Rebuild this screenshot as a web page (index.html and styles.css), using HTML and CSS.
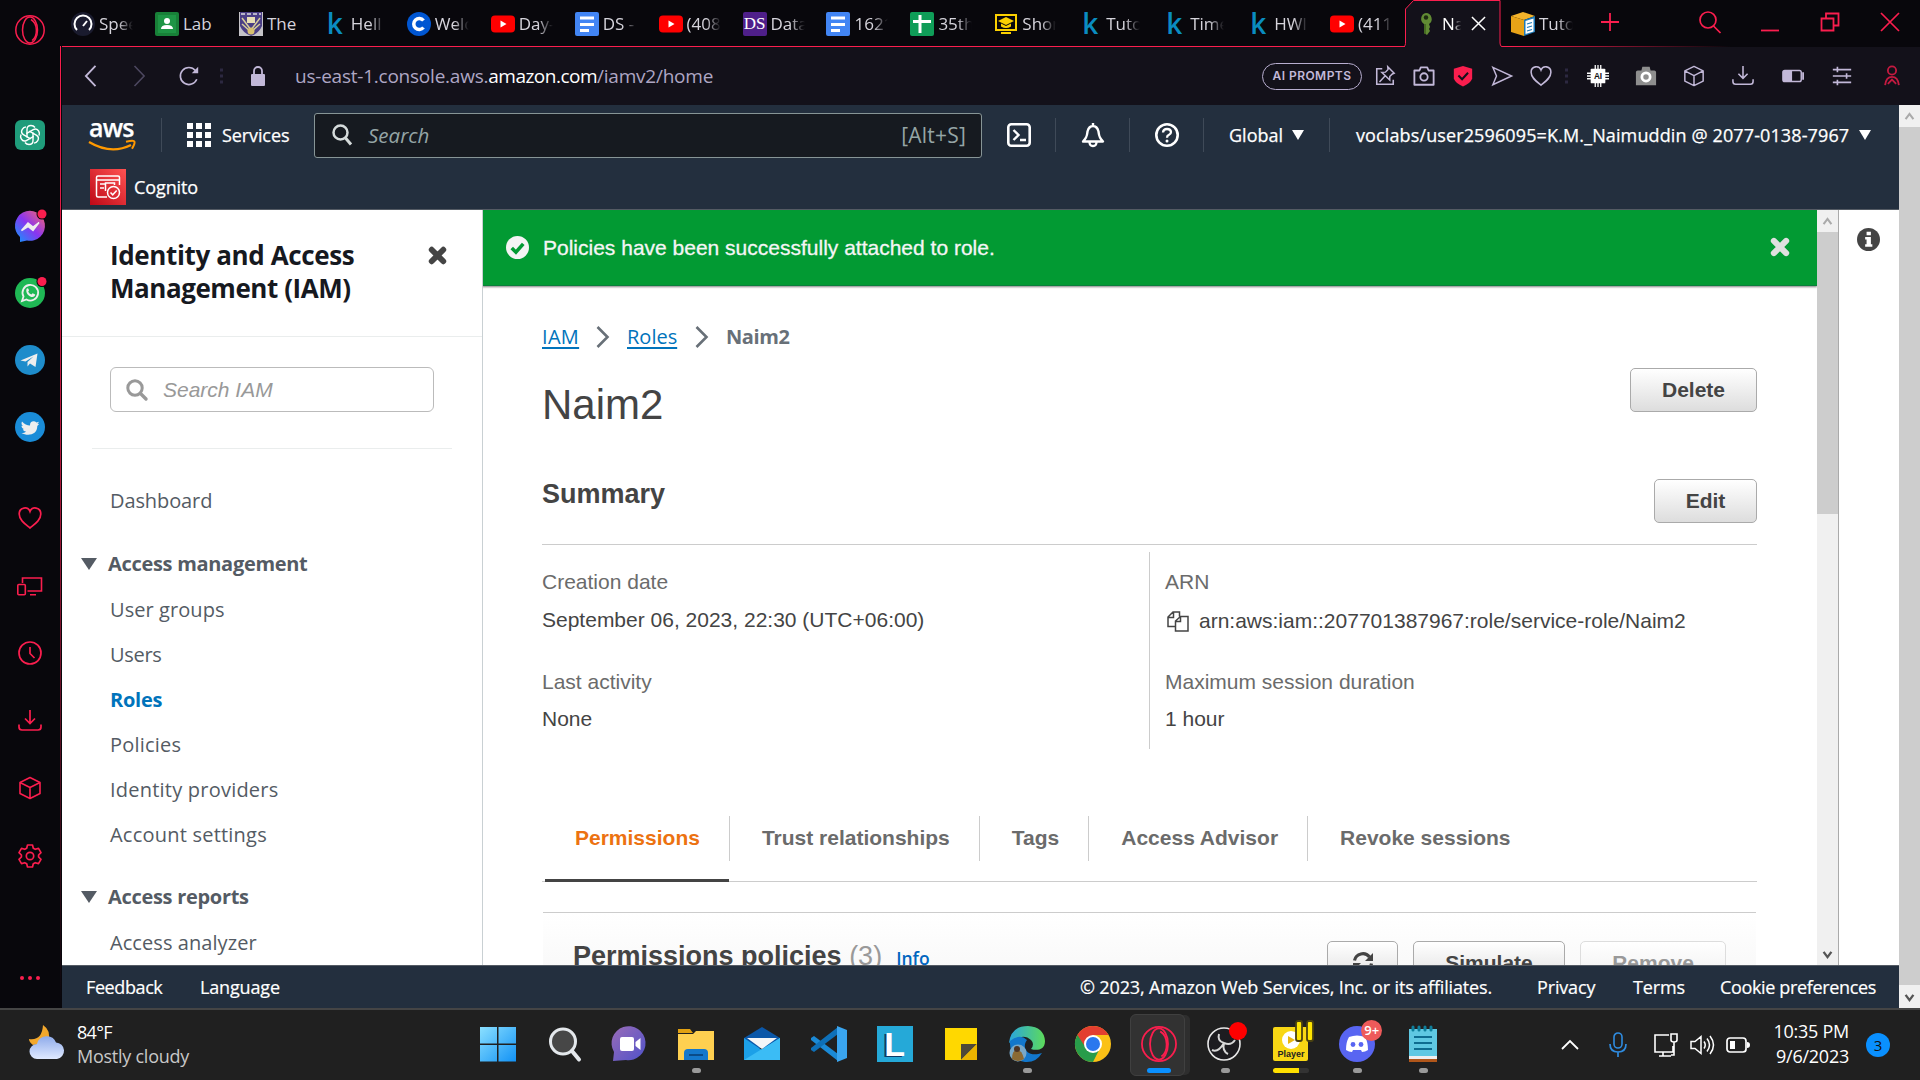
FILE: index.html
```html
<!DOCTYPE html>
<html lang="en">
<head>
<meta charset="utf-8">
<title>Naim2 | IAM</title>
<link rel="stylesheet" href="styles.css">
</head>
<body>
<svg class="defs" aria-hidden="true">
  <symbol id="youtube" viewBox="0 0 24 24"><rect y="3.5" width="24" height="17" rx="4" fill="#f00"/><path d="M9.5 8.5v7l6-3.500z" fill="#fff"/></symbol>
  <symbol id="docs" viewBox="0 0 24 24"><rect width="24" height="24" rx="2" fill="#4285f4"/><path d="M5 6h14M5 12.500h14M5 18.500h9" stroke="#fff" stroke-width="3"/></symbol>
  <symbol id="opera" viewBox="0 0 30 30"><g fill="none" stroke="#fa1e4e" stroke-width="1.500"><circle cx="15" cy="15" r="14.200"/><ellipse cx="15" cy="15" rx="7.500" ry="13"/><path d="M16 4.500c7 4 7 17 1 21"/></g></symbol>
  <symbol id="cube" viewBox="0 0 24 24"><path d="M12 1.500l10 5v11l-10 5-10-5v-11zM2 6.500l10 5 10-5M12 11.500v11" fill="none" stroke="currentColor" stroke-width="1.600" stroke-linejoin="round"/></symbol>
  <symbol id="download" viewBox="0 0 24 24"><path d="M12 1v13M7 9.500l5 5 5-5M1 15.500v2.500q0 3 3 3h16q3 0 3-3v-2.500" fill="none" stroke="currentColor" stroke-width="1.700"/></symbol>
  <symbol id="heart" viewBox="0 0 24 24"><path d="M12 22C7 18 1.200 14 1.200 8c0-7 8.800-8 10.800-2.500C14 0 22.800 1 22.800 8c0 6-5.800 10-10.800 14z" fill="none" stroke="currentColor" stroke-width="1.700"/></symbol>
  <symbol id="cross" viewBox="0 0 18 18"><path d="M3.500 3.500l11 11M14.500 3.500l-11 11" stroke="currentColor" stroke-width="5.500" stroke-linecap="round"/></symbol>
</svg>

<div class="browser">
  <aside class="rail">
    <svg class="r"><use href="#opera"/></svg>
    <svg class="r gpt" viewBox="0 0 30 30"><rect width="30" height="30" rx="6" fill="#1f9c7b"/><g fill="none" stroke="#fff" stroke-width="1.400"><path d="M12 17.500V9.500q0-4 4-4 2.500 0 4 2"/><path d="M12 17.500V9.500q0-4 4-4 2.500 0 4 2" transform="rotate(60 15 15)"/><path d="M12 17.500V9.500q0-4 4-4 2.500 0 4 2" transform="rotate(120 15 15)"/><path d="M12 17.500V9.500q0-4 4-4 2.500 0 4 2" transform="rotate(180 15 15)"/><path d="M12 17.500V9.500q0-4 4-4 2.500 0 4 2" transform="rotate(240 15 15)"/><path d="M12 17.500V9.500q0-4 4-4 2.500 0 4 2" transform="rotate(300 15 15)"/></g></svg>
    <svg class="r social" viewBox="0 0 30 30"><defs><linearGradient id="msg" x1="0" y1="1" x2="1" y2="0"><stop stop-color="#0a9cff"/><stop offset=".5" stop-color="#8a35f0"/><stop offset="1" stop-color="#ff6968"/></linearGradient></defs><path d="M5 31v-5A15 15 0 1 1 12 29.500z" fill="url(#msg)"/><path d="M6.500 19.500l6.500-7.500 5 4 6-4.500-6 8-5-4z" fill="#eee" stroke="#eee" stroke-width="1.500"/><circle cx="27" cy="3" r="5.500" fill="#08070c"/><circle cx="27" cy="3" r="4.500" fill="#fa1e4e"/></svg>
    <svg class="r next" viewBox="0 0 30 30"><circle cx="15" cy="15" r="15" fill="#1fb855"/><path d="M7 23l1.500-4.500a7.800 7.800 0 1 1 3 3z" fill="none" stroke="#eee" stroke-width="1.800"/><path d="M11.500 11c1-1.500 2-.5 2.500 1.500l-.8 1.200q1 2 3.200 2.800l1.200-1.300 2.600 1.300c0 2.500-3 3-5 1.900-3-1.500-4.500-4.500-3.700-7.400z" fill="#eee"/><circle cx="27" cy="3.500" r="5.500" fill="#08070c"/><circle cx="27" cy="3.500" r="4.500" fill="#fa1e4e"/></svg>
    <svg class="r next" viewBox="0 0 30 30"><circle cx="15" cy="15" r="15" fill="#1e8ccb"/><path d="M5.500 15.500L22.500 8.500 20.500 22l-5.500-3.500-2.500 3v-4.500l6-5.500-8 5z" fill="#eee"/></svg>
    <svg class="r next" viewBox="0 0 30 30"><circle cx="15" cy="15" r="15" fill="#1a8cd8"/><path d="M7 9.500q3.500 4 8 4c-.5-4 4-5.500 6.500-3l2.500-.8-1.500 2.300 1.800-.3-2 2.300c0 9-9.500 10.500-15.800 7 2.200 0 3.500-.5 4.500-1.500-2-.3-2.800-1.200-3.200-2.300h1.400c-2-.8-2.700-2-2.700-3.500l1.400.4c-1.500-1.300-1.700-3-.9-4.600z" fill="#eee"/></svg>
    <svg class="r t social"><use href="#heart"/></svg>
    <svg class="r t next" viewBox="0 0 24 24"><g fill="none" stroke="currentColor" stroke-width="1.600"><path d="M4.500 9V4h19v13h-14M12 20.800h6"/><rect x="-.2" y="10.500" width="7.500" height="10.300" rx="1"/></g></svg>
    <svg class="r t next" viewBox="0 0 24 24"><g fill="none" stroke="currentColor" stroke-width="1.700"><circle cx="12" cy="12" r="11"/><path d="M12 6v6.500l4.500 4.500"/></g></svg>
    <svg class="r t next"><use href="#download"/></svg>
    <svg class="r t next"><use href="#cube"/></svg>
    <svg class="r t next" viewBox="0 0 24 24"><g fill="none" stroke="currentColor" stroke-width="1.700" stroke-linejoin="round"><circle cx="12" cy="12" r="3.700"/><path d="M9.500 1h5l.8 3.200 2 1.100 3.200-.9 2.500 4.200-2.400 2.400v2l2.400 2.400-2.500 4.200-3.200-.9-2 1.100-.8 3.200h-5l-.8-3.200-2-1.100-3.200.9L1 15.400 3.400 13v-2L1 8.600l2.500-4.200 3.200.9 2-1.100z"/></g></svg>
    <svg class="r dots" viewBox="0 0 30 30"><g fill="#fa1e4e"><circle cx="7" cy="15" r="2"/><circle cx="15" cy="15" r="2"/><circle cx="23" cy="15" r="2"/></g></svg>
  </aside>

  <div class="window">
    <div class="tabstrip">
      <div class="tab"><svg class="fav" viewBox="0 0 24 24"><circle cx="12" cy="12" r="12" fill="#1a1b2e"/><path d="M6 18a8.500 8.500 0 1 1 12 0M12 14l4-5" fill="none" stroke="#fff" stroke-width="2"/></svg><span>Spee</span></div>
      <div class="tab"><svg class="fav" viewBox="0 0 24 24"><rect width="24" height="24" rx="2" fill="#188038"/><rect x="3" y="3" width="18" height="18" fill="#1e9545"/><circle cx="12" cy="9" r="3" fill="#fff"/><path d="M6 17q0-4 6-4t6 4z" fill="#fff"/></svg><span>Lab</span></div>
      <div class="tab"><svg class="fav" viewBox="0 0 24 24"><rect width="24" height="24" fill="#c5c3c8"/><path d="M1 0h22v14q-3 7-11 10Q4 21 1 14z" fill="#4b3f86"/><path d="M3 6l9 12 9-12M3 12l9 8 9-8" fill="none" stroke="#d8cf9a" stroke-width="1.500"/><rect x="8" y="5" width="8" height="6" fill="#e8dfb5"/><circle cx="12" cy="19" r="3.500" fill="#d8c070"/><path d="M2 2h20" stroke="#ddd" stroke-width="1.500" stroke-dasharray="4 2"/></svg><span>The</span></div>
      <div class="tab"><b class="fav k">k</b><span>Hell</span></div>
      <div class="tab"><svg class="fav" viewBox="0 0 24 24"><circle cx="12" cy="12" r="12" fill="#0056d2"/><path d="M16.500 8.500a5.500 5.500 0 1 0 0 7" fill="none" stroke="#fff" stroke-width="3.500"/></svg><span>Welc</span></div>
      <div class="tab"><svg class="fav"><use href="#youtube"/></svg><span>Day-</span></div>
      <div class="tab"><svg class="fav"><use href="#docs"/></svg><span>DS -</span></div>
      <div class="tab"><svg class="fav"><use href="#youtube"/></svg><span>(408</span></div>
      <div class="tab"><b class="fav ds">DS</b><span>Data</span></div>
      <div class="tab"><svg class="fav"><use href="#docs"/></svg><span>1621</span></div>
      <div class="tab"><svg class="fav" viewBox="0 0 24 24"><rect width="24" height="24" rx="2" fill="#0f9d58"/><path d="M3 9.500h18M10 3v18" stroke="#fff" stroke-width="3"/></svg><span>35th</span></div>
      <div class="tab"><svg class="fav" viewBox="0 0 24 24"><g fill="none" stroke="#fbd000" stroke-width="2"><rect x="2" y="3" width="20" height="15"/><path d="M7 21h10"/></g><path d="M12 5l8 4-8 4-8-4zM7 11.500v3q5 3 10 0v-3l-5 2.500z" fill="#fbd000"/></svg><span>Shor</span></div>
      <div class="tab"><b class="fav k">k</b><span>Tuto</span></div>
      <div class="tab"><b class="fav k">k</b><span>Time</span></div>
      <div class="tab"><b class="fav k">k</b><span>HWI</span></div>
      <div class="tab"><svg class="fav"><use href="#youtube"/></svg><span>(411</span></div>
      <div class="tab active"><svg class="edge" viewBox="0 0 98 47"><path d="M1 47V9L10 .500h86V43q0 3.500 2 3.500V48H0z" fill="#13111a"/><path d="M0 46.500q1.500-1 1.500-3V9L9.500 .500H96V43q0 3.500 2 3.500" fill="none" stroke="#fa1e4e"/></svg><svg class="fav" viewBox="0 0 24 24"><path d="M12 1a6 6 0 0 1 3 11l1 3-1 2 1 2-3 4-3-2V12A6 6 0 0 1 12 1z" fill="#618b34"/><circle cx="12" cy="5.500" r="2.200" fill="#1d2a10"/><path d="M11 12v10" stroke="#3c5f1c" stroke-width="1.500"/></svg><span>Na</span><svg class="tabx" viewBox="0 0 16 16"><path d="M1 1l14 14M15 1L1 15" stroke="#fff" stroke-width="1.600"/></svg></div>
      <div class="tab"><svg class="fav" viewBox="0 0 24 24"><path d="M0 4L12 0l12 4-11 4z" fill="#f3b32b"/><path d="M0 4l13 4v16L0 20z" fill="#e8a317"/><path d="M13 8l11-4v16l-11 4z" fill="#1f7ab8"/><path d="M14.500 9l8-2.500v13l-8 2.500z" fill="#fff"/><path d="M16 12l5-1.500M16 15.500l5-1.500M16 19l5-1.500" stroke="#1f7ab8" stroke-width="1.300"/></svg><span>Tuto</span></div>
      <div class="winctl">
        <svg viewBox="0 0 24 24"><path d="M12 3v18M3 12h18" stroke="currentColor" stroke-width="1.800"/></svg>
        <svg class="find" viewBox="0 0 24 24"><circle cx="10" cy="10" r="8" fill="none" stroke="currentColor" stroke-width="1.700"/><path d="M15.500 16l7 7" stroke="currentColor" stroke-width="1.700"/></svg>
        <svg viewBox="0 0 24 24"><path d="M3 20.500h18" stroke="currentColor" stroke-width="1.800"/></svg>
        <svg viewBox="0 0 24 24"><path d="M3.500 8.500h12v12h-12zM8 8.500v-5h12.500v12h-5" fill="none" stroke="currentColor" stroke-width="1.800"/></svg>
        <svg viewBox="0 0 24 24"><path d="M3 3l18 18M21 3L3 21" stroke="currentColor" stroke-width="1.700"/></svg>
      </div>
    </div>

    <div class="navbar">
      <div class="navleft">
        <svg viewBox="0 0 24 24"><path d="M18 1L7.500 12 18 23" fill="none" stroke="currentColor" stroke-width="2"/></svg>
        <svg class="dim" viewBox="0 0 24 24"><path d="M6 1l10.500 11L6 23" fill="none" stroke="currentColor" stroke-width="1.700"/></svg>
        <svg viewBox="0 0 24 24"><path d="M20.500 15.500A9.300 9.300 0 1 1 19 6" fill="none" stroke="currentColor" stroke-width="1.800"/><path d="M22 2v7h-7z" fill="currentColor"/></svg>
      </div>
      <svg class="grip" viewBox="0 0 4 16"><path d="M0 2h3M0 8h3M0 14h3" stroke="#2c2840" stroke-width="3"/></svg>
      <svg class="lock" viewBox="0 0 14 20"><rect y="8" width="14" height="12" rx="1" fill="currentColor"/><path d="M3 9V5a4 4 0 0 1 8 0v4" fill="none" stroke="currentColor" stroke-width="1.800"/></svg>
      <div class="url"><span class="u1">us-east-1.console.aws.</span><span class="u2">amazon.com</span><span class="u3">/iamv2/home</span></div>
      <div class="pill">AI PROMPTS</div>
      <div class="acts">
        <svg viewBox="0 0 24 24"><path d="M9 4H3v17h18v-5" fill="none" stroke="currentColor" stroke-width="1.700"/><path d="M15 2l7 7-2 .8-2.800 2.700v4L8.500 8l4-.2L15.300 5zM12.500 11.500L6 18.500" fill="none" stroke="currentColor" stroke-width="1.600"/></svg>
        <svg viewBox="0 0 24 24"><path d="M1.500 6H7l1.500-3.500h7L17 6h5.500v15.500h-21z" fill="none" stroke="currentColor" stroke-width="2" stroke-linejoin="round"/><circle cx="12" cy="13" r="4" fill="none" stroke="currentColor" stroke-width="2"/></svg>
        <svg viewBox="0 0 24 24"><path d="M12 1l10 3v11q-2 5-10 8.500-8-3.500-10-8.500V4z" fill="#fa1e4e"/><path d="M7 11.500l4 4 6.500-7" fill="none" stroke="#13111a" stroke-width="2.200"/></svg>
        <svg viewBox="0 0 24 24"><path d="M2 2.500L22.500 12 2 21.500 6 12z" fill="none" stroke="currentColor" stroke-width="1.600"/></svg>
        <svg><use href="#heart"/></svg>
      </div>
      <svg class="grip g2" viewBox="0 0 4 16"><path d="M0 2h3M0 8h3M0 14h3" stroke="#2c2840" stroke-width="3"/></svg>
      <div class="exts">
        <svg viewBox="0 0 24 24"><path d="M9 0v24M12 0v24M15 0v24M0 9h24M0 12h24M0 15h24" stroke="#fff" stroke-width="1.400"/><rect x="4" y="4" width="16" height="16" rx="1" fill="#fff"/><text x="12" y="15" text-anchor="middle" class="chip">AI</text></svg>
        <svg viewBox="0 0 24 24"><path d="M1 8q0-2 2-2h4l1-4h8l1 4h4q2 0 2 2v14H1z" fill="#8e8e8e"/><circle cx="12" cy="13" r="4.500" fill="none" stroke="#fff" stroke-width="3"/></svg>
        <svg><use href="#cube"/></svg>
        <svg><use href="#download"/></svg>
        <svg viewBox="0 0 24 24"><rect x="1" y="6" width="20" height="12" rx="2" fill="none" stroke="currentColor" stroke-width="1.600"/><path d="M1 6.500h10v11H1zM22 8h2v8h-2z" fill="currentColor"/></svg>
        <svg viewBox="0 0 24 24"><path d="M2 5h20M2 12h20M2 19h20M7 2v6M17 9v6M7 16v6" stroke="currentColor" stroke-width="1.800"/></svg>
        <svg class="me" viewBox="0 0 24 24"><g fill="none" stroke="#c41a40" stroke-width="2"><circle cx="12" cy="6" r="4.500"/><path d="M4.500 22q1-9 7.500-9t7.500 9M7.500 20.500L12 16l4.500 4.500"/></g></svg>
      </div>
    </div>

    <div class="page">
      <div class="console">
        <header>
          <div class="row1">
            <div class="logo"><span>aws</span><svg viewBox="0 0 48 12"><path d="M1 2q22 13 42 3" fill="none" stroke="#f90" stroke-width="2.300"/><path d="M38 1.800q8-2 8.500 0t-2.500 7" fill="none" stroke="#f90" stroke-width="2"/></svg></div>
            <i class="vr"></i>
            <svg class="grid9" viewBox="0 0 24 24" fill="#fff"><path d="M0 0h6v6H0zM9 0h6v6H9zM18 0h6v6h-6zM0 9h6v6H0zM9 9h6v6H9zM18 9h6v6h-6zM0 18h6v6H0zM9 18h6v6H9zM18 18h6v6h-6z"/></svg>
            <span class="services">Services</span>
            <div class="search"><svg viewBox="0 0 20 22"><circle cx="8.500" cy="8.500" r="7" fill="none" stroke="#d5dbdb" stroke-width="2.500"/><path d="M13.500 14l5.500 6.500" stroke="#d5dbdb" stroke-width="3"/></svg><em>Search</em><span>[Alt+S]</span></div>
            <div class="hicons">
              <div><svg viewBox="0 0 24 24"><rect x="1.300" y="1.300" width="21.400" height="21.400" rx="3" fill="none" stroke="#fff" stroke-width="2.600"/><path d="M6.500 7l5 5-5 5M13 17h6" fill="none" stroke="#fff" stroke-width="2.400"/></svg></div>
              <div><svg viewBox="0 0 24 24"><path d="M2 18.500c4-4 4-6 4.500-10Q8 3 12 3t5.500 5.500c.5 4 .5 6 4.500 10zM12 0v3" fill="none" stroke="#fff" stroke-width="2.400" stroke-linejoin="round"/><path d="M8.500 19q0 4 3.500 4t3.500-4" fill="none" stroke="#fff" stroke-width="2.300"/></svg></div>
              <div><svg viewBox="0 0 24 24"><circle cx="12" cy="12" r="10.700" fill="none" stroke="#fff" stroke-width="2.600"/><path d="M8 9.500q.3-3.500 4-3.500t4 3q0 1.800-2 2.800-2 .9-2 2.900" fill="none" stroke="#fff" stroke-width="2.300"/><circle cx="12" cy="18" r="1.500" fill="#fff"/></svg></div>
            </div>
            <span class="region">Global</span><i class="tri w"></i>
            <i class="vr v2"></i>
            <span class="acct">voclabs/user2596095=K.M._Naimuddin @ 2077-0138-7967</span><i class="tri w"></i>
          </div>
          <div class="row2">
            <svg viewBox="0 0 36 36"><defs><linearGradient id="cg" x1="0" y1="1" x2="1" y2="0"><stop stop-color="#bd0816"/><stop offset="1" stop-color="#ff5252"/></linearGradient></defs><rect width="36" height="36" fill="url(#cg)"/><g fill="none" stroke="#fff" stroke-width="1.500"><path d="M17 28H8q-1.500 0-1.500-1.500v-18Q6.500 7 8 7h20q1.500 0 1.500 1.500V16M6.500 11h23M10 15h6M10 19h4M15.500 22v-8h9v2"/><circle cx="23.500" cy="23.500" r="6"/><path d="M20.500 23.500l2.200 2.300 4-4.300"/></g></svg>
            <span>Cognito</span>
          </div>
        </header>

        <div class="body">
          <nav class="side">
            <div class="sidehead"><h2><span class="l1">Identity and Access</span><br><span class="l2">Management (IAM)</span></h2><svg><use href="#cross"/></svg></div>
            <div class="iamsearch"><svg viewBox="0 0 22 22"><circle cx="9" cy="9" r="7.200" fill="none" stroke="#999" stroke-width="3"/><path d="M14.500 14.500l5.500 5.500" stroke="#999" stroke-width="3.400" stroke-linecap="round"/></svg><em>Search IAM</em></div>
            <hr>
            <a class="i dash">Dashboard</a>
            <div class="grp"><i class="tri g"></i><span class="s1">Access management</span></div>
            <a class="i ug">User groups</a>
            <a class="i users">Users</a>
            <a class="i on">Roles</a>
            <a class="i wide">Policies</a>
            <a class="i wide">Identity providers</a>
            <a class="i wide">Account settings</a>
            <div class="grp g2nd"><i class="tri g"></i><span>Access reports</span></div>
            <a class="i ug">Access analyzer</a>
          </nav>

          <main>
            <div class="flash"><svg class="ok" viewBox="0 0 22 22"><circle cx="11" cy="11" r="11" fill="#f4f4f4"/><path d="M5.500 11.500l4 4 7-8" fill="none" stroke="#029a33" stroke-width="3.400"/></svg><span>Policies have been successfully attached to role.</span><svg class="x"><use href="#cross"/></svg></div>
            <div class="content">
              <div class="crumbs"><a class="c1">IAM</a><svg viewBox="0 0 14 22"><path d="M1.500 1l10 10-10 10" fill="none" stroke="#687078" stroke-width="2.600"/></svg><a class="c2">Roles</a><svg viewBox="0 0 14 22"><path d="M1.500 1l10 10-10 10" fill="none" stroke="#687078" stroke-width="2.600"/></svg><b>Naim2</b></div>
              <div class="title"><h1>Naim2</h1><button class="del">Delete</button></div>
              <div class="sumhead"><h3>Summary</h3><button class="edit">Edit</button></div>
              <div class="cols">
                <dl class="left"><dt>Creation date</dt><dd>September 06, 2023, 22:30 (UTC+06:00)</dd><dt class="n">Last activity</dt><dd>None</dd></dl>
                <dl><dt>ARN</dt><dd class="arn"><svg viewBox="0 0 22 21"><path d="M8.500 15.500H1V6l5-5h6.500v4.500M1 6.500h5.500V1M8.500 10l5-4.500h7.500v14.500H8.500zM8.500 10.500h5V5.500" fill="none" stroke="#444" stroke-width="1.500"/></svg>arn:aws:iam::207701387967:role/service-role/Naim2</dd><dt class="n">Maximum session duration</dt><dd>1 hour</dd></dl>
              </div>
              <div class="tabs"><a class="sel">Permissions</a><a>Trust relationships</a><a>Tags</a><a>Access Advisor</a><a>Revoke sessions</a></div>
              <section class="panel">
                <h3>Permissions policies <span>(3)</span></h3><a>Info</a>
                <div class="btns"><button class="rf"><svg viewBox="0 0 22 22"><path d="M2.500 9.500A8.500 8.500 0 0 1 17.500 6M19.500 12.500A8.500 8.500 0 0 1 4.500 16" fill="none" stroke="#444" stroke-width="3.200"/><path d="M21 2v8h-8zM1 20v-8h8z" fill="#444"/></svg></button><button class="sim">Simulate</button><button class="rm">Remove</button></div>
              </section>
            </div>
          </main>
          <div class="sb inner"><svg viewBox="0 0 10 10"><path d="M2 7l3-4 3 4" fill="none" stroke="#aaa" stroke-width="1.600"/></svg><div class="thumb"></div><svg class="dn" viewBox="0 0 10 10"><path d="M2 3l3 4 3-4" fill="none" stroke="#555" stroke-width="1.800"/></svg></div>
          <aside class="info"><svg viewBox="0 0 24 24"><circle cx="12" cy="12" r="12" fill="#444"/><path d="M10 4h4.500v3.500H10zM8.500 9.500h6V17H16v2.500H8.500V17H10v-5H8.500z" fill="#fff"/></svg></aside>
        </div>

        <footer><span class="fb">Feedback</span><span class="lang">Language</span><span class="copy">© 2023, Amazon Web Services, Inc. or its affiliates.</span><span class="pv">Privacy</span><span class="tm">Terms</span><span class="ck">Cookie preferences</span></footer>
      </div>
      <div class="sb outer"><svg viewBox="0 0 10 10"><path d="M2 7l3-4 3 4" fill="none" stroke="#aaa" stroke-width="1.600"/></svg><div class="thumb"></div><svg class="dn" viewBox="0 0 10 10"><path d="M2 3l3 4 3-4" fill="none" stroke="#555" stroke-width="1.800"/></svg></div>
    </div>
  </div>
</div>

<div class="taskbar">
  <div class="weather">
    <svg viewBox="0 0 36 36"><defs><linearGradient id="cl" x1="0" y1="0" x2="0" y2="1"><stop stop-color="#8fabea"/><stop offset="1" stop-color="#dfe9ff"/></linearGradient></defs><path d="M14 0q9 6 5 17L4 20Q0 17 0 14q13 2 14-14z" fill="#f3a82c"/><path d="M8 34a7.500 7.500 0 0 1 0-15 10 10 0 0 1 19-1.500A8.300 8.300 0 0 1 28 34z" fill="url(#cl)"/></svg>
    <div><span class="deg">84°F</span><span class="cond">Mostly cloudy</span></div>
  </div>
  <div class="apps">
    <div><svg viewBox="0 0 36 36"><defs><linearGradient id="win" x1="0" y1="0" x2="1" y2="1"><stop stop-color="#8be0ff"/><stop offset="1" stop-color="#1292f5"/></linearGradient></defs><path d="M0 1h17v16.500H0zM18.500 1H36v16.500H18.500zM0 19h17v16.500H0zM18.500 19H36v16.500H18.500z" fill="url(#win)"/></svg></div>
    <div><svg viewBox="0 0 36 36"><circle cx="17" cy="15.500" r="12.500" fill="#474747" stroke="#e4e8ec" stroke-width="3"/><path d="M26 25l7 8.500" stroke="#e4e8ec" stroke-width="4" stroke-linecap="round"/></svg></div>
    <div><svg viewBox="0 0 36 36"><defs><linearGradient id="ch" x1="0" y1="0" x2="1" y2="1"><stop stop-color="#9a6cb8"/><stop offset="1" stop-color="#4f52c9"/></linearGradient></defs><path d="M1 35l1-9A17 17 0 1 1 14 34z" fill="url(#ch)"/><rect x="8" y="11" width="14" height="14" rx="2" fill="#fff"/><path d="M23.500 16l5-4v12l-5-4z" fill="#fff"/></svg></div>
    <div><svg viewBox="0 0 36 36"><path d="M0 3h12l3 4H0z" fill="#e2a112"/><path d="M0 8h15l3-3h18v29H0z" fill="#ffd050"/><path d="M6 34v-7q0-4 4-4h16q4 0 4 4v7z" fill="#1478cc"/><path d="M11 29h14" stroke="#0a4b88" stroke-width="2"/></svg><i></i></div>
    <div><svg viewBox="0 0 36 36"><path d="M0 12L18 1l18 11v10H0z" fill="#0b57a8"/><path d="M0 12l18 12L36 12v22H0z" fill="#1ca0e8"/><path d="M0 34l36-22v22z" fill="#3bbcf5"/><path d="M3 12h30L18 23z" fill="#f5f6f8"/></svg></div>
    <div><svg viewBox="0 0 36 36"><path d="M0 12l3-2L27 28v7L0 14z" fill="#1b8ad6"/><path d="M0 24l3 2L27 8V1L0 22z" fill="#0e70b8"/><path d="M26 0l10 4v28l-10 4z" fill="#3aa5ef"/></svg></div>
    <div><b class="lapp">L</b></div>
    <div><svg viewBox="0 0 36 36"><path d="M2 2h32v32H2z" fill="#ffd800"/><path d="M18 34V18h16z" fill="#4f4838"/><path d="M34 18v16H18z" fill="#ebb400"/></svg></div>
    <div><svg viewBox="0 0 36 36"><defs><linearGradient id="eg" x1="0" y1="0" x2="1" y2="0"><stop stop-color="#2aa5de"/><stop offset="1" stop-color="#5ddb5a"/></linearGradient></defs><path d="M0 17Q2 0 19 0q16 1 17 15c0 9-8 10-14 8q4-5 0-9-8-8-22 3z" fill="url(#eg)"/><path d="M1 15q10-8 17-1c-6 8 1 18 15 13q-6 10-17 9Q0 33 1 15z" fill="#1277cc"/><circle cx="9" cy="27" r="8.500" fill="#78a8c8"/><path d="M3 33q0-9 5-9t7 9q-6 4-12 0z" fill="#8a6a35"/><circle cx="8" cy="23" r="3" fill="#4d3526"/></svg><i></i></div>
    <div><svg viewBox="0 0 36 36"><circle cx="18" cy="18" r="18" fill="#fbc116"/><path d="M18 18L2.400 9A18 18 0 0 0 18 36l7-14z" fill="#289c4a"/><path d="M2.400 9a18 18 0 0 1 31.200 0H18l-7 13z" fill="#e33e30"/><circle cx="18" cy="18" r="9" fill="#fff"/><circle cx="18" cy="18" r="7" fill="#2a78ee"/></svg></div>
    <div class="cur"><svg><use href="#opera"/></svg><i class="blue"></i></div>
    <div><svg viewBox="0 0 36 36"><circle cx="17" cy="18" r="16" fill="#1d1c20" stroke="#e8e8e8" stroke-width="1.600"/><g fill="none" stroke="#d8d8d8" stroke-width="2"><path d="M17 17q-7-2-5-9M17 17q7 3 11-3M17 17q-2 8 4 11M5 24q6 3 12-7"/></g><circle cx="31" cy="5" r="9" fill="#f00"/></svg><i></i></div>
    <div><svg viewBox="0 0 36 36"><rect y="1" width="35" height="34" rx="2" fill="#f8d714"/><circle cx="18" cy="14" r="9" fill="#fff"/><path d="M15 10v8l7-4z" fill="#e8b810"/><text x="18" y="31" text-anchor="middle" class="player">Player</text><g fill="#ffe500" stroke="#4a4210" stroke-width="1.800"><rect x="23" y="-5" width="6" height="20" rx="2"/><rect x="34" y="-5" width="6" height="20" rx="2"/></g></svg><i class="yel"></i></div>
    <div><svg viewBox="0 0 36 36"><circle cx="18" cy="18" r="18" fill="#5865f2"/><path d="M10 11q8-3 16 0 3 5 3 13-3 2-6 2l-1-2h-8l-1 2q-3 0-6-2 0-8 3-13z" fill="#fff"/><circle cx="14" cy="18.500" r="2.400" fill="#5865f2"/><circle cx="22" cy="18.500" r="2.400" fill="#5865f2"/></svg><b class="badge">9+</b><i></i></div>
    <div><svg viewBox="0 0 36 36"><path d="M4 3h28v29H4z" fill="#5fc8e2"/><path d="M4 30h28v3H4z" fill="#eee"/><path d="M4 33h28v3H4z" fill="#b0561a"/><path d="M9 11h18M9 17h18M9 23h18" stroke="#0e6c90" stroke-width="2"/><path d="M8 1v3M14 1v3M20 1v3M26 1v3" stroke="#0e7f9c" stroke-width="3" stroke-linecap="round"/></svg><i></i></div>
  </div>
  <div class="tray">
    <svg viewBox="0 0 24 24"><path d="M4 16l8-8 8 8" fill="none" stroke="#fff" stroke-width="1.800"/></svg>
    <svg class="mic" viewBox="0 0 24 24"><rect x="8" y="0" width="8" height="15" rx="4" fill="none" stroke="#2f8ce0" stroke-width="1.600"/><path d="M4 11q0 8 8 8t8-8M12 19v5" fill="none" stroke="#2f8ce0" stroke-width="1.700"/></svg>
    <svg class="net" viewBox="0 0 24 24"><path d="M15 2H1v17h18v-6M5 23h12M9 19v4M17 1h6v6q0 2-3 2t-3-2zM20 9v13h-3" fill="none" stroke="#fff" stroke-width="1.600"/></svg>
    <svg viewBox="0 0 24 24"><path d="M1 8.500h4l6-5v17l-6-5H1zM14 8.500q2.500 3.500 0 7M17 5.500q5 6.500 0 13M20 3q7 9 0 18" fill="none" stroke="#fff" stroke-width="1.500"/></svg>
    <svg viewBox="0 0 24 24"><rect x="1" y="5" width="19" height="14" rx="3" fill="none" stroke="#fff" stroke-width="1.700"/><path d="M4 8h5v8H4zM21 9q3 0 3 3t-3 3z" fill="#fff"/></svg>
    <div class="clock"><span>10:35 PM</span><span>9/6/2023</span></div>
    <b class="count">3</b>
  </div>
</div>
</body>
</html>
```
FILE: styles.css
```css
* { box-sizing: border-box; }
body { margin: 0; width: 1920px; height: 1080px; overflow: hidden; background: #08070c; font-family: "Open Sans", sans-serif; }
svg { display: block; flex: none; overflow: visible; }
.defs { position: absolute; width: 0; height: 0; }
h1, h2, h3, dl, dd, dt { margin: 0; }
span, a, b, em { white-space: nowrap; }

.browser { display: flex; height: 1008px; }
.rail { width: 62px; display: flex; flex-direction: column; align-items: center; padding: 15px 2px 0 0; background: linear-gradient(#fa1e4e, #b51a3e 40%, #08070c 95%) 60px 46px / 1px 100% no-repeat #08070c; }
.r { width: 30px; height: 30px; }
.t { width: 24px; height: 24px; margin: 3px 0; color: #fa1e4e; }
.gpt { margin-top: 75px; }
.social { margin-top: 61px; }
.next { margin-top: 37px; }
.t.social { margin-top: 64px; }
.t.next { margin-top: 40.5px; }
.dots { margin-top: 92px; }

.window { flex: 1; display: flex; flex-direction: column; min-width: 0; }
.tabstrip { height: 47px; display: flex; background: linear-gradient(90deg, #fa1e4e 1450px, transparent 1670px) -1px 46px / 100% 1px no-repeat #08070c; }
.tab { width: 83.95px; flex: none; padding-left: 9px; display: flex; align-items: center; gap: 4px; position: relative; font-size: 17px; color: #d6d4dc; }
.fav { width: 24px; height: 24px; flex: none; }
.tab > span { width: 35px; overflow: hidden; -webkit-mask-image: linear-gradient(90deg, #000 55%, transparent 97%); mask-image: linear-gradient(90deg, #000 55%, transparent 97%); }
.tab:nth-child(2) > span, .tab:nth-child(3) > span { -webkit-mask-image: none; mask-image: none; }
.k { color: #0a8cc0; font: 600 28px/22px "Open Sans", sans-serif; padding-left: 4px; }
.ds { background: #4f1f8a; border-radius: 2px; color: #fff; font: 17px/24px "Liberation Serif", serif; text-align: center; }
.tab.active { width: 97px; color: #fff; }
.tab.active > span { width: 20px; }
.tab.active .fav, .tab.active > span { position: relative; }
.edge { position: absolute; left: -1px; top: 0; width: 98px; height: 47px; }
.tabx { width: 15px; height: 15px; margin-left: 5px; position: relative; }
.winctl { margin-left: auto; display: flex; align-items: center; gap: 36px; color: #fa1e4e; padding-right: 18px; }
.winctl svg { width: 24px; height: 24px; margin-bottom: 3px; }
.winctl .find { margin-left: 40px; }

.navbar { height: 58px; background: #13111a; display: flex; align-items: center; color: #c2b8d8; padding-left: 17px; }
.navleft { display: flex; gap: 27.5px; }
.navleft svg, .acts svg, .exts svg { width: 22px; height: 22px; }
.dim { color: #4d4860; }
.grip { width: 4px; height: 16px; margin-left: 20px; }
.lock { width: 14px; height: 20px; margin-left: 27px; }
.url { margin-left: 30px; font-size: 19px; letter-spacing: -.23px; flex: 1; color: #aea6c4; display: flex; }
.url .u2 { color: #fff; letter-spacing: -.5px; }
.pill { width: 100px; height: 27px; border: 1.500px solid #b8aed0; border-radius: 14px; font: 600 12px/24px Inter, sans-serif; text-align: center; letter-spacing: .45px; white-space: nowrap; }
.acts { display: flex; gap: 17px; margin-left: 12px; }
.grip.g2 { margin-left: 13px; }
.exts { display: flex; gap: 27px; margin-left: 18px; padding-right: 17px; }
.exts svg:nth-child(2), .exts svg:nth-child(3) { margin-left: -1px; }
.exts svg:nth-child(5), .exts svg:nth-child(7) { margin-left: 1px; }
.chip { font: 700 9px "Liberation Sans", sans-serif; fill: #111; }

.page { flex: 1; display: flex; min-height: 0; }
.console { width: 1837px; display: flex; flex-direction: column; }
header { height: 105px; background: #232f3e; border-bottom: 1px solid #545b64; color: #fff; font-size: 18px; font-weight: 500; -webkit-text-stroke: .25px; }
.row1 { height: 60px; display: flex; align-items: center; }
.row1 > span, .row2 span { margin-bottom: 1px; }
.logo { width: 48px; margin-left: 26px; height: 37px; }
.logo span { display: block; font: 600 25px/21px "Open Sans", sans-serif; letter-spacing: -.8px; padding-left: 1px; }
.logo svg { width: 48px; height: 12px; margin-top: 2px; }
.vr { width: 1px; height: 34px; background: #3f4a58; margin-left: 25px; }
.grid9 { width: 24px; height: 24px; margin-left: 25px; }
.services { margin-left: 11px; letter-spacing: -.1px; width: 68px; }
.search { margin-left: 24px; width: 668px; height: 45px; border: 1px solid #879596; border-radius: 3px; background: #161a20; display: flex; align-items: center; padding: 0 15px 0 17px; color: #95a5a6; font-size: 21px; font-weight: 400; -webkit-text-stroke: 0; }
.search svg { width: 20px; height: 22px; }
.search em { margin: 0 0 1px 16px; flex: 1; font-size: 20.500px; }
.search span { font-size: 21px; letter-spacing: .2px; margin-bottom: 1px; }
.hicons { display: flex; }
.hicons div { width: 74px; height: 34px; display: flex; align-items: center; justify-content: center; border-right: 1px solid #3f4a58; }
.hicons svg { width: 24px; height: 24px; }
.region { margin-left: 25px; width: 54px; }
.tri { width: 0; height: 0; border: 6.500px solid transparent; border-top: 10px solid #fff; border-bottom: 0; }
.tri.w { margin-left: 9px; }
.vr.v2 { margin-left: 25px; }
.acct { margin-left: 26px; width: 494px; letter-spacing: .12px; }
.row2 { height: 44px; display: flex; align-items: center; padding-left: 28px; gap: 8px; letter-spacing: -.1px; }
.row2 svg { width: 36px; height: 36px; }

.body { flex: 1; min-height: 0; display: flex; overflow: hidden; background: #fff; }
.side { width: 421px; border-right: 1px solid #c9d0d3; font-size: 20px; color: #545b64; display: flex; flex-direction: column; }
.side > * { flex: none; }
.sidehead { height: 127px; border-bottom: 1px solid #eaeded; padding: 29px 35px 0 48px; display: flex; justify-content: space-between; color: #16191f; }
.sidehead h2 { font-size: 26px; line-height: 33px; letter-spacing: -.37px; }
.sidehead .l2 { letter-spacing: -.45px; }
.sidehead svg { width: 19px; height: 19px; margin-top: 7px; color: #444; }
.iamsearch { margin: 30px 0 0 48px; width: 324px; height: 45px; border: 1px solid #bbb; border-radius: 6px; display: flex; align-items: center; padding-left: 15px; gap: 15px; font: 21px "Liberation Sans", sans-serif; color: #999; }
.iamsearch svg { width: 22px; height: 22px; }
hr { border: 0; height: 1px; background: #eaeded; width: 360px; margin: 36px 0 29px 30px; }
.i { height: 45px; line-height: 45px; padding-left: 48px; letter-spacing: -.1px; }
.i.ug { letter-spacing: .07px; }
.i.wide { letter-spacing: .22px; }
.i.users { letter-spacing: -.3px; }
.i.on { color: #0073bb; font-weight: 700; letter-spacing: -.25px; }
.grp { height: 45px; margin: 18px 0 1px; display: flex; align-items: center; padding-left: 19px; font-weight: 700; letter-spacing: -.3px; }
.grp.g2nd { margin-top: 17px; }
.tri.g { border-width: 12px 8px 0; border-top-color: #545b64; margin-right: 11px; }

main { width: 1334px; overflow: hidden; font: 21px "Liberation Sans", sans-serif; color: #444; }
.flash { height: 76px; background: #029a33; border-bottom: 1px solid #0a7f3b; box-shadow: 0 1px 2px rgba(0,0,0,.5); margin-left: -1px; display: flex; align-items: center; padding: 0 27px 0 24px; color: #f5f5f5; -webkit-text-stroke: .3px; }
.ok { width: 23px; height: 23px; margin-right: 14px; }
.flash .x { margin: 0 0 1px auto; width: 20px; height: 20px; color: #e0e0e0; }
.content { padding: 30px 60px 0 59px; }
.crumbs { height: 40px; display: flex; align-items: center; font: 20px "Open Sans", sans-serif; color: #687078; }
.crumbs a { color: #0073bb; text-decoration: underline; text-decoration-thickness: 2px; text-underline-offset: 3px; }
.crumbs .c1 { width: 38px; letter-spacing: .3px; }
.crumbs .c2 { width: 52px; }
.crumbs b { letter-spacing: -.4px; }
.crumbs svg { width: 14px; height: 22px; margin: 1px 17px 0 16px; }
.title { display: flex; justify-content: space-between; align-items: flex-start; margin-top: 12px; height: 111px; }
h1 { font-size: 42px; font-weight: 400; line-height: 50px; margin-top: 12px; }
h3 { font-size: 27px; line-height: 30px; font-weight: 700; }
button { height: 44px; border: 1px solid #aaa; border-radius: 5px; background: linear-gradient(#fff, #ddd); font: 700 21px/40px "Liberation Sans", sans-serif; color: #444; padding: 0; }
.del { width: 127px; }
.edit { width: 103px; }
.sumhead { display: flex; justify-content: space-between; align-items: flex-start; height: 66px; border-bottom: 1px solid #ccc; }
.cols { display: flex; margin-top: 7px; height: 197px; }
.cols dl { padding: 15px 0 0 15px; line-height: 30px; }
.cols .left { width: 608px; padding-left: 0; border-right: 1px solid #ccc; }
dt { color: #6b6b6b; margin-bottom: 8px; }
dt.n { margin: 32px 0 7px; }
dd.arn { display: flex; align-items: center; gap: 10px; position: relative; top: 1px; }
dd.arn svg { width: 22px; height: 21px; margin-left: 2px; }
.tabs { display: flex; margin-top: 67px; height: 66px; border-bottom: 1px solid #ccc; padding-left: 3px; font-weight: 700; color: #6b6b6b; }
.tabs a { height: 45px; line-height: 43px; padding: 0 29px 0 32px; border-right: 1px solid #ccc; position: relative; }
.tabs a:last-child { border: 0; }
.tabs a.sel { color: #ec7211; padding: 0 29px 0 30px; }
.tabs .sel::after { content: ""; position: absolute; left: 0; right: 0; top: 63px; height: 3px; background: #444; }
.panel { margin: 30px 1px 0 1px; height: 120px; border-top: 1px solid #ccc; background: linear-gradient(#fff, #f2f2f2); display: flex; align-items: flex-start; padding: 0 30px; }
.panel h3 { margin-top: 28px; }
.panel h3 span { color: #999; font-weight: 400; }
.panel a { font: 600 17.500px/24px "Open Sans", sans-serif; color: #0066c0; margin: 33px 0 0 14px; }
.btns { margin: 28px 0 0 auto; display: flex; gap: 15px; }
.rf { width: 71px; display: flex; justify-content: center; align-items: flex-start; }
.rf svg { width: 22px; height: 22px; margin-top: 9px; }
.sim { width: 152px; }
.btns .rm { width: 146px; color: #999; border-color: #ddd; background: linear-gradient(#fff, #eee); }

.sb { width: 21px; background: #f0f0f0; display: flex; flex-direction: column; align-items: center; }
.sb svg { width: 13px; height: 13px; margin: 5px 0 4px; }
.sb .thumb { width: 21px; background: #cdcdcd; height: 282px; }
.sb .dn { margin: auto 0 4px; }
.outer .thumb { height: 858px; }
.info { flex: 1; border-left: 1px solid #aaa; display: flex; justify-content: center; padding: 18px 1px 0 0; }
.info svg { width: 23px; height: 23px; }

footer { height: 43px; background: #232f3e; border-top: 1px solid #545b64; color: #fff; font-size: 18px; display: flex; align-items: center; padding: 0 24px 1px; letter-spacing: -.15px; -webkit-text-stroke: .2px; }
.fb { letter-spacing: -.4px; width: 77px; }
.fb, .lang { font-weight: 500; }
.lang { margin-left: 37px; }
.copy { margin-left: auto; width: 413px; }
.pv { margin-left: 44px; width: 59px; }
.tm { margin-left: 37px; width: 50px; }
.ck { margin-left: 37px; width: 155px; letter-spacing: -.35px; }

.taskbar { height: 72px; background: #202020; border-top: 2px solid #454545; display: flex; color: #fff; font-size: 18px; }
.weather { width: 465px; padding-left: 29px; display: flex; align-items: center; gap: 12px; }
.weather > svg { width: 36px; height: 36px; margin-bottom: 4px; }
.weather div { display: flex; flex-direction: column; line-height: 24.500px; letter-spacing: -.25px; padding-bottom: 2px; }
.weather .deg { letter-spacing: -.7px; }
.cond { color: #c8c8c8; }
.apps { display: flex; }
.apps > div { width: 66.1px; display: flex; justify-content: center; padding-top: 16px; position: relative; }
.apps svg { width: 36px; height: 36px; position: relative; }
.apps i { position: absolute; top: 58px; left: 29px; width: 9px; height: 5px; border-radius: 3px; background: #9a9a9a; }
.apps i.blue { left: 21px; width: 24px; background: #0a90ff; }
.apps i.yel { left: 15px; width: 36px; background: linear-gradient(90deg, #ffe000 26px, #333 26px); }
.apps .cur::before { content: ""; position: absolute; left: 4px; top: 4px; width: 53px; height: 60px; border-radius: 6px; background: #323232; border: 1px solid #404040; box-shadow: 6px 0 0 -1px #2e2e2e; }
.lapp { width: 36px; height: 36px; background: #25a9d8; font: 700 34px/36px "Liberation Sans", sans-serif; text-align: center; text-shadow: -2px 1px 0 #0d3a66; }
.player { font: 700 9px "Liberation Sans", sans-serif; fill: #222; }
.badge { position: absolute; left: 37px; top: 10px; width: 21px; height: 21px; border-radius: 50%; background: #ee5a5a; font: 600 13px/20px "Open Sans", sans-serif; text-align: center; }
.tray { margin-left: auto; padding-right: 30px; display: flex; align-items: center; }
.tray svg { width: 24px; height: 24px; margin-right: 12px; }
.tray svg:first-child, .tray .mic { margin-right: 24px; }
.clock { width: 87px; display: flex; flex-direction: column; align-items: flex-end; line-height: 24.500px; letter-spacing: -.25px; padding-bottom: 3px; }
.count { width: 24px; height: 24px; border-radius: 50%; background: #0a90ff; color: #111; font: 15px/24px "Open Sans", sans-serif; text-align: center; margin-left: 17px; }
```
